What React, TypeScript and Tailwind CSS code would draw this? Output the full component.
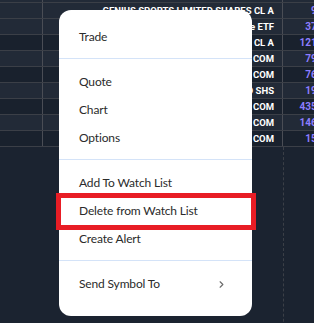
import { ChevronRight } from 'lucide-react';

// rows of the watch list behind the context menu
const rows = [
  { name: 'INVESCO QQQ TRUST SERIES 1', last: '512.44', dark: false },
  { name: 'GENIUS SPORTS LIMITED SHARES CL A', last: '9.25', dark: false },
  { name: 'ISHARES CORE S&P Large ETF', last: '37.41', dark: false },
  { name: 'ALPHABET INC CL A', last: '121.10', dark: true },
  { name: 'PALANTIR TECH COM', last: '79.33', dark: false },
  { name: 'ADVANCED MICRO COM', last: '76.02', dark: true },
  { name: 'TAIWAN SEMI ORD SHS', last: '19.87', dark: false },
  { name: 'MICROSOFT CORP COM', last: '435.60', dark: true },
  { name: 'NVIDIA CORP COM', last: '146.21', dark: false },
  { name: 'SOFI TECH INC COM', last: '15.48', dark: true },
];

const sections = [
  ['Trade'],
  ['Quote', 'Chart', 'Options'],
  ['Add To Watch List', 'Delete from Watch List', 'Create Alert'],
  ['Send Symbol To'],
];

const MenuItem = ({ label }: { label: string }) => {
  const highlighted = label === 'Delete from Watch List';
  const sub = label === 'Send Symbol To';
  return (
    <div className="relative flex h-[28px] items-center pl-[20px] pr-[25px] text-[12px] tracking-[-0.15px] text-[#2b2b2b]">
      <span className="flex-1 whitespace-nowrap">{label}</span>
      {sub && <ChevronRight className="h-[11px] w-[11px] text-[#6b6b6b]" strokeWidth={2.5} />}
      {highlighted && (
        <div className="absolute -left-[3px] -right-[4px] -top-[4px] -bottom-[5px] border-[5px] border-[#e81d25]" />
      )}
    </div>
  );
};

export default function App() {
  return (
    <div className="relative h-[323px] w-[314px] overflow-hidden bg-[#1b2330] font-['Roboto',sans-serif]">
      {/* table */}
      <div className="-mt-[13px]">
        {rows.map((r) => (
          <div
            key={r.name}
            className={`flex h-[16px] border-b border-[#3b3f47] text-[9.5px] font-bold leading-[15px] ${
              r.dark ? 'bg-[#19212d]' : 'bg-[#222a37]'
            }`}
          >
            <div className="w-[43px] shrink-0 border-r border-[#4a4d55]" />
            <div className="w-[240px] shrink-0 overflow-hidden whitespace-nowrap border-r border-[#4a4d55] pr-[8px] text-right text-white">
              {r.name}
            </div>
            <div className="w-[60px] shrink-0 pr-[12px] text-right text-[10px] text-[#8c7dff]">{r.last}</div>
          </div>
        ))}
        <div className="ml-[283px] h-[200px] border-l border-dashed border-[#3b3f47]" />
      </div>

      {/* context menu */}
      <div className="absolute left-[59px] top-[10px] w-[193px] rounded-[12px] bg-white pb-[11px] pt-[4px] font-['Lato',sans-serif]">
        {sections.map((items, i) => (
          <div key={i} className={i > 0 ? 'border-t border-[#d4e3f8] pt-[9px] pb-[7px]' : 'pt-[9px] pb-[7px]'}>
            {items.map((label) => (
              <MenuItem key={label} label={label} />
            ))}
          </div>
        ))}
      </div>
    </div>
  );
}
